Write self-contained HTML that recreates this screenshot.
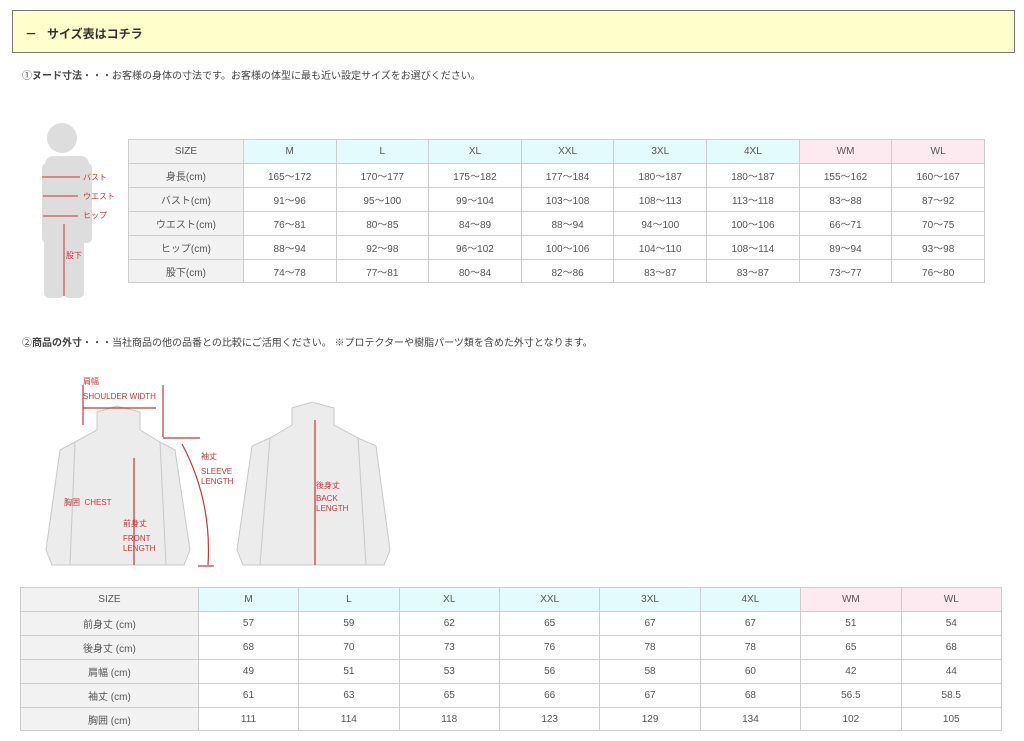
<!DOCTYPE html>
<html><head><meta charset="utf-8"><style>
body{margin:0;background:#fff;width:1024px;height:741px;overflow:hidden;font-family:"Liberation Sans","Noto Sans CJK JP",sans-serif;color:#444;position:relative}
.hd{position:absolute;left:12px;top:10px;width:1003px;height:43px;background:#ffffcc;border:1.5px solid #777;box-sizing:border-box}
.hd span{position:absolute;left:12px;top:14px;font-size:12px;font-weight:bold;color:#333}
.t{position:absolute;font-size:10px;color:#444}
table{position:absolute;border-collapse:collapse;font-size:10px;color:#555}
td{border:1px solid #ccc;text-align:center;padding:0;background:#fff}
td.g{background:#f2f2f2}
td.c{background:#e4fbfd}
td.p{background:#fdeaf0}
.r{color:#c33;position:absolute;font-size:8px}
</style></head><body>
<div class="hd"><span>－&nbsp;&nbsp;&nbsp;サイズ表はコチラ</span></div>
<div class="t" style="left:22px;top:67px">①<b>ヌード寸法</b>・・・お客様の身体の寸法です。お客様の体型に最も近い設定サイズをお選びください。</div>

<svg style="position:absolute;left:40px;top:118px" width="80" height="182">
<circle cx="22" cy="20" r="15" fill="#ddd"/>
<rect x="5" y="38" width="44" height="80" rx="8" fill="#ddd"/>
<rect x="2" y="45" width="12" height="80" rx="5" fill="#ddd"/>
<rect x="40" y="45" width="12" height="80" rx="5" fill="#ddd"/>
<rect x="4" y="110" width="20" height="70" rx="5" fill="#ddd"/>
<rect x="24" y="110" width="20" height="70" rx="5" fill="#ddd"/>
<g stroke="#c33" stroke-width="1"><line x1="2" y1="59" x2="40" y2="59"/><line x1="3" y1="78" x2="38" y2="78"/><line x1="3" y1="98" x2="38" y2="98"/><line x1="24" y1="106" x2="24" y2="178"/></g>
</svg>
<div class="r" style="left:83px;top:172px">バスト</div>
<div class="r" style="left:83px;top:191px">ウエスト</div>
<div class="r" style="left:83px;top:210px">ヒップ</div>
<div class="r" style="left:66px;top:250px">股下</div>

<table style="left:128px;top:139px;width:857px">
<colgroup><col style="width:115px"><col span="8" style="width:92.75px"></colgroup>
<tr style="height:24px"><td class="g">SIZE</td><td class="c">M</td><td class="c">L</td><td class="c">XL</td><td class="c">XXL</td><td class="c">3XL</td><td class="c">4XL</td><td class="p">WM</td><td class="p">WL</td></tr>
<tr style="height:24px"><td class="g">身長(cm)</td><td>165～172</td><td>170～177</td><td>175～182</td><td>177～184</td><td>180～187</td><td>180～187</td><td>155～162</td><td>160～167</td></tr>
<tr style="height:24px"><td class="g">バスト(cm)</td><td>91～96</td><td>95～100</td><td>99～104</td><td>103～108</td><td>108～113</td><td>113～118</td><td>83～88</td><td>87～92</td></tr>
<tr style="height:24px"><td class="g">ウエスト(cm)</td><td>76～81</td><td>80～85</td><td>84～89</td><td>88～94</td><td>94～100</td><td>100～106</td><td>66～71</td><td>70～75</td></tr>
<tr style="height:24px"><td class="g">ヒップ(cm)</td><td>88～94</td><td>92～98</td><td>96～102</td><td>100～106</td><td>104～110</td><td>108～114</td><td>89～94</td><td>93～98</td></tr>
<tr style="height:23px"><td class="g">股下(cm)</td><td>74～78</td><td>77～81</td><td>80～84</td><td>82～86</td><td>83～87</td><td>83～87</td><td>73～77</td><td>76～80</td></tr>
</table>

<div class="t" style="left:22px;top:334px">②<b>商品の外寸</b>・・・当社商品の他の品番との比較にご活用ください。 ※プロテクターや樹脂パーツ類を含めた外寸となります。</div>

<svg style="position:absolute;left:40px;top:380px" width="360" height="200">
<g fill="#ececec" stroke="#c8c8c8" stroke-width="1">
<path d="M35 62 L20 70 L6 170 L12 185 L30 185 L40 120 Z"/>
<path d="M120 62 L135 70 L150 170 L144 185 L126 185 L115 120 Z"/>
<path d="M35 62 L57 50 L57 32 L77 26 L100 32 L100 50 L120 62 L126 185 L30 185 Z"/>
<path d="M230 58 L212 66 L197 170 L203 185 L220 185 L232 120 Z"/>
<path d="M318 58 L336 66 L350 170 L344 185 L326 185 L316 120 Z"/>
<path d="M230 58 L252 45 L252 28 L272 22 L294 28 L294 45 L318 58 L326 185 L220 185 Z"/>
</g>
<g stroke="#c33" stroke-width="1.2" fill="none">
<line x1="94" y1="78" x2="94" y2="185"/><line x1="275" y1="40" x2="275" y2="185"/>
<line x1="43" y1="5" x2="43" y2="45"/><line x1="123" y1="5" x2="123" y2="57"/><line x1="43" y1="28" x2="116" y2="28"/>
<line x1="123" y1="58" x2="160" y2="58"/><path d="M142 64 Q172 120 168 185"/><line x1="158" y1="186" x2="174" y2="186"/>
</g></svg>
<div class="r" style="left:83px;top:376px">肩幅</div>
<div class="r" style="left:83px;top:392px">SHOULDER WIDTH</div>
<div class="r" style="left:201px;top:451px">袖丈</div>
<div class="r" style="left:201px;top:467px;line-height:10px">SLEEVE<br>LENGTH</div>
<div class="r" style="left:64px;top:497px">胸囲&nbsp; CHEST</div>
<div class="r" style="left:123px;top:518px">前身丈</div>
<div class="r" style="left:123px;top:534px;line-height:10px">FRONT<br>LENGTH</div>
<div class="r" style="left:316px;top:480px">後身丈</div>
<div class="r" style="left:316px;top:494px;line-height:10px">BACK<br>LENGTH</div>

<table style="left:20px;top:587px;width:982px">
<colgroup><col style="width:178px"><col span="8" style="width:100.5px"></colgroup>
<tr style="height:24px"><td class="g">SIZE</td><td class="c">M</td><td class="c">L</td><td class="c">XL</td><td class="c">XXL</td><td class="c">3XL</td><td class="c">4XL</td><td class="p">WM</td><td class="p">WL</td></tr>
<tr style="height:24px"><td class="g">前身丈 (cm)</td><td>57</td><td>59</td><td>62</td><td>65</td><td>67</td><td>67</td><td>51</td><td>54</td></tr>
<tr style="height:24px"><td class="g">後身丈 (cm)</td><td>68</td><td>70</td><td>73</td><td>76</td><td>78</td><td>78</td><td>65</td><td>68</td></tr>
<tr style="height:24px"><td class="g">肩幅 (cm)</td><td>49</td><td>51</td><td>53</td><td>56</td><td>58</td><td>60</td><td>42</td><td>44</td></tr>
<tr style="height:24px"><td class="g">袖丈 (cm)</td><td>61</td><td>63</td><td>65</td><td>66</td><td>67</td><td>68</td><td>56.5</td><td>58.5</td></tr>
<tr style="height:23px"><td class="g">胸囲 (cm)</td><td>111</td><td>114</td><td>118</td><td>123</td><td>129</td><td>134</td><td>102</td><td>105</td></tr>
</table>
</body></html>
